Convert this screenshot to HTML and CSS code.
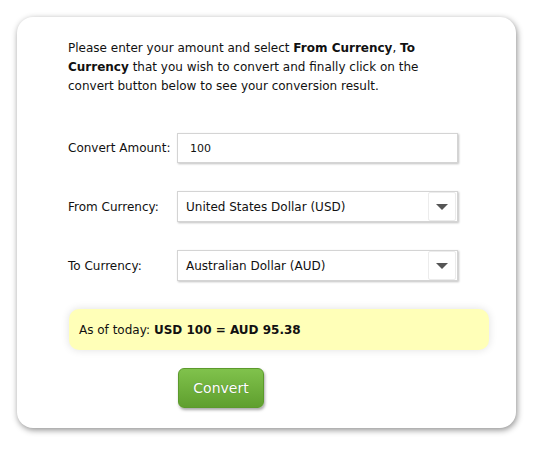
FILE: index.html
```html
<!DOCTYPE html>
<html>
<head>
<meta charset="utf-8">
<link rel="stylesheet" href="styles.css">
</head>
<body>
<div class="card">
  <p class="intro">Please enter your amount and select <b>From Currency</b>, <b>To Currency</b> that you wish to convert and finally click on the convert button below to see your conversion result.</p>
  <div class="form">
    <label class="lbl">Convert Amount:</label>
    <div class="field input">100</div>
    <label class="lbl">From Currency:</label>
    <div class="field select"><span class="val">United States Dollar (USD)</span><span class="drop"><span class="arrow"></span></span></div>
    <label class="lbl">To Currency:</label>
    <div class="field select"><span class="val">Australian Dollar (AUD)</span><span class="drop"><span class="arrow"></span></span></div>
  </div>
  <div class="result">As of today: <b>USD 100 = AUD 95.38</b></div>
  <div class="actions"><button class="btn">Convert</button></div>
</div>
</body>
</html>
```
FILE: styles.css
```css
html, body { margin: 0; padding: 0; background: #fff; }
body {
  font-family: "DejaVu Sans", Verdana, sans-serif;
  font-size: 12px;
  color: #111;
  padding: 17px 21px 21px 17px;
}
.card {
  width: 499px;
  height: 411px;
  box-sizing: border-box;
  background: #fff;
  border-radius: 16px;
  box-shadow: 1px 2px 6px rgba(0,0,0,0.45);
  padding: 22px 0 0 51px;
}
.intro {
  margin: 0;
  width: 358px;
  line-height: 19px;
}
.form {
  margin-top: 37px;
  display: grid;
  grid-template-columns: 109px 281px;
  row-gap: 28px;
  align-items: center;
}
.lbl { line-height: 18px; white-space: nowrap; }
.field {
  box-sizing: border-box;
  height: 30px;
  border: 1px solid #d4d4d4;
  box-shadow: 1px 1px 2px rgba(0,0,0,0.25);
  background: #fff;
  display: flex;
  align-items: center;
}
.input { padding-left: 12px; font-size: 11px; }
.select { height: 31px; padding-left: 8px; justify-content: space-between; }
.drop {
  width: 26px;
  height: 27px;
  margin-right: 1px;
  border: 1px solid #ececec;
  border-radius: 2px;
  display: flex;
  align-items: center;
  justify-content: center;
}
.arrow {
  width: 0; height: 0;
  border-left: 6px solid transparent;
  border-right: 6px solid transparent;
  border-top: 6px solid #555;
}
.result {
  margin-top: 28px;
  margin-left: 1px;
  width: 420px;
  height: 41px;
  box-sizing: border-box;
  background: #ffffb8;
  border-radius: 10px;
  box-shadow: 0 0 8px rgba(0,0,0,0.12);
  padding-left: 10px;
  display: flex;
  align-items: center;
  gap: 4px;
}
.actions { margin-top: 18px; padding-left: 110px; }
.btn {
  width: 86px;
  height: 40px;
  border: 1px solid #5c9a2c;
  border-radius: 6px;
  background: linear-gradient(#80c24c, #5f9f2e);
  color: #fff;
  font-family: "DejaVu Sans", Verdana, sans-serif;
  font-size: 14px;
  text-shadow: 0 0 1px rgba(0,0,0,0.3);
  box-shadow: 1px 2px 3px rgba(0,0,0,0.35);
  padding: 0;
}
```
